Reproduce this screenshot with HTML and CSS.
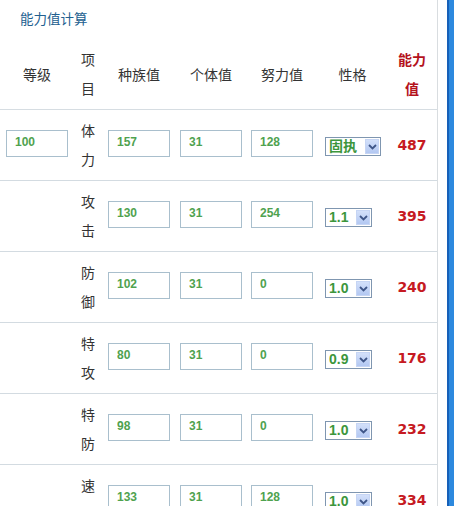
FILE: index.html
```html
<!DOCTYPE html>
<html lang="zh-CN">
<head>
  <meta charset="UTF-8" />
  <title>能力值计算</title>
  <link rel="stylesheet" href="styles.css">
</head>
<body>
  <div class="page">
    <div class="panel">
      <div class="title">能力值计算</div>

      <!-- header -->
      <div class="row head">
        <div class="cell">等级</div>
        <div class="cell name">项目</div>
        <div class="cell">种族值</div>
        <div class="cell">个体值</div>
        <div class="cell">努力值</div>
        <div class="cell">性格</div>
        <div class="cell total">能力值</div>
      </div>

      <div class="row">
        <div class="cell"><input type="text" value="100"></div>
        <div class="cell name">体力</div>
        <div class="cell"><input type="text" value="157"></div>
        <div class="cell"><input type="text" value="31"></div>
        <div class="cell"><input type="text" value="128"></div>
        <div class="cell sel"><span class="pick wide"><select><option>固执</option></select><span class="arrow"><svg width="9" height="6" viewBox="0 0 9 6"><path d="M1 1 L4.5 4.5 L8 1" fill="none" stroke="#3f5688" stroke-width="1.8"/></svg></span></span></div>
        <div class="cell result">487</div>
      </div>

      <div class="row">
        <div class="cell"></div>
        <div class="cell name">攻击</div>
        <div class="cell"><input type="text" value="130"></div>
        <div class="cell"><input type="text" value="31"></div>
        <div class="cell"><input type="text" value="254"></div>
        <div class="cell sel"><span class="pick"><select><option>1.1</option></select><span class="arrow"><svg width="9" height="6" viewBox="0 0 9 6"><path d="M1 1 L4.5 4.5 L8 1" fill="none" stroke="#3f5688" stroke-width="1.8"/></svg></span></span></div>
        <div class="cell result">395</div>
      </div>

      <div class="row">
        <div class="cell"></div>
        <div class="cell name">防御</div>
        <div class="cell"><input type="text" value="102"></div>
        <div class="cell"><input type="text" value="31"></div>
        <div class="cell"><input type="text" value="0"></div>
        <div class="cell sel"><span class="pick"><select><option>1.0</option></select><span class="arrow"><svg width="9" height="6" viewBox="0 0 9 6"><path d="M1 1 L4.5 4.5 L8 1" fill="none" stroke="#3f5688" stroke-width="1.8"/></svg></span></span></div>
        <div class="cell result">240</div>
      </div>

      <div class="row">
        <div class="cell"></div>
        <div class="cell name">特攻</div>
        <div class="cell"><input type="text" value="80"></div>
        <div class="cell"><input type="text" value="31"></div>
        <div class="cell"><input type="text" value="0"></div>
        <div class="cell sel"><span class="pick"><select><option>0.9</option></select><span class="arrow"><svg width="9" height="6" viewBox="0 0 9 6"><path d="M1 1 L4.5 4.5 L8 1" fill="none" stroke="#3f5688" stroke-width="1.8"/></svg></span></span></div>
        <div class="cell result">176</div>
      </div>

      <div class="row">
        <div class="cell"></div>
        <div class="cell name">特防</div>
        <div class="cell"><input type="text" value="98"></div>
        <div class="cell"><input type="text" value="31"></div>
        <div class="cell"><input type="text" value="0"></div>
        <div class="cell sel"><span class="pick"><select><option>1.0</option></select><span class="arrow"><svg width="9" height="6" viewBox="0 0 9 6"><path d="M1 1 L4.5 4.5 L8 1" fill="none" stroke="#3f5688" stroke-width="1.8"/></svg></span></span></div>
        <div class="cell result">232</div>
      </div>

      <div class="row">
        <div class="cell"></div>
        <div class="cell name">速度</div>
        <div class="cell"><input type="text" value="133"></div>
        <div class="cell"><input type="text" value="31"></div>
        <div class="cell"><input type="text" value="128"></div>
        <div class="cell sel"><span class="pick"><select><option>1.0</option></select><span class="arrow"><svg width="9" height="6" viewBox="0 0 9 6"><path d="M1 1 L4.5 4.5 L8 1" fill="none" stroke="#3f5688" stroke-width="1.8"/></svg></span></span></div>
        <div class="cell result">334</div>
      </div>
    </div>
    <div class="gap"></div>
    <div class="bar"></div>
  </div>
</body>
</html>
```

FILE: styles.css
```css
body {
  margin: 0;
  background: #fff;
  font-family: "Noto Sans CJK SC", sans-serif;
  color: #333;
  overflow: hidden;
}
.page {
  display: flex;
  height: 506px;
}
.panel {
  width: 437px;
  border-right: 1px solid #d9dde0;
}
.gap {
  width: 9px;
}
.bar {
  width: 5px;
  border-left: 2px solid #1660b8;
  background: #2d89de;
}
.title {
  height: 39px;
  padding-left: 20px;
  line-height: 36px;
  font-size: 13.5px;
  color: #22608f;
}
.row {
  display: grid;
  grid-template-columns: 74px 28px 74px 70px 72px 69px 50px;
  align-items: center;
  height: 70px;
  border-bottom: 1px solid #d3dbe1;
}
.head {
  border-bottom-color: #d6dde2;
}
.cell {
  text-align: center;
  font-size: 14px;
  line-height: 29px;
}
.name {
  padding: 0 7px;
}
.sel {
  text-align: left;
  padding-left: 7px;
}
.total {
  padding: 0 6px;
  color: #b4121c;
  font-weight: bold;
}
input {
  width: 62px;
  height: 27px;
  box-sizing: border-box;
  margin: 0 0 4px;
  padding: 0 0 2px 8px;
  border: 1px solid #a9bfcd;
  font-family: "Liberation Sans", Arial, sans-serif;
  font-size: 12px;
  font-weight: bold;
  color: #4fa24f;
  vertical-align: middle;
}
.pick {
  position: relative;
  display: inline-block;
  width: 47px;
  height: 19px;
  vertical-align: middle;
  line-height: 17px;
}
.pick.wide {
  width: 56px;
}
select {
  display: block;
  appearance: none;
  width: 100%;
  height: 19px;
  box-sizing: border-box;
  margin: 0;
  padding: 0 0 0 3px;
  border: 1px solid #7f96b0;
  border-radius: 0;
  background: #fff;
  font-family: "Liberation Sans", "Noto Sans CJK SC", sans-serif;
  font-size: 14px;
  font-weight: bold;
  line-height: 17px;
  color: #3c963c;
}
.arrow {
  position: absolute;
  top: 2px;
  right: 2px;
  width: 14px;
  height: 15px;
  display: flex;
  align-items: center;
  justify-content: center;
  background: linear-gradient(#d3e0fa, #b3c8f2);
  border: 1px solid #c6d5f4;
  box-sizing: border-box;
}
.result {
  font-family: "DejaVu Sans", Verdana, sans-serif;
  font-size: 14px;
  font-weight: bold;
  color: #c61a22;
}
```
